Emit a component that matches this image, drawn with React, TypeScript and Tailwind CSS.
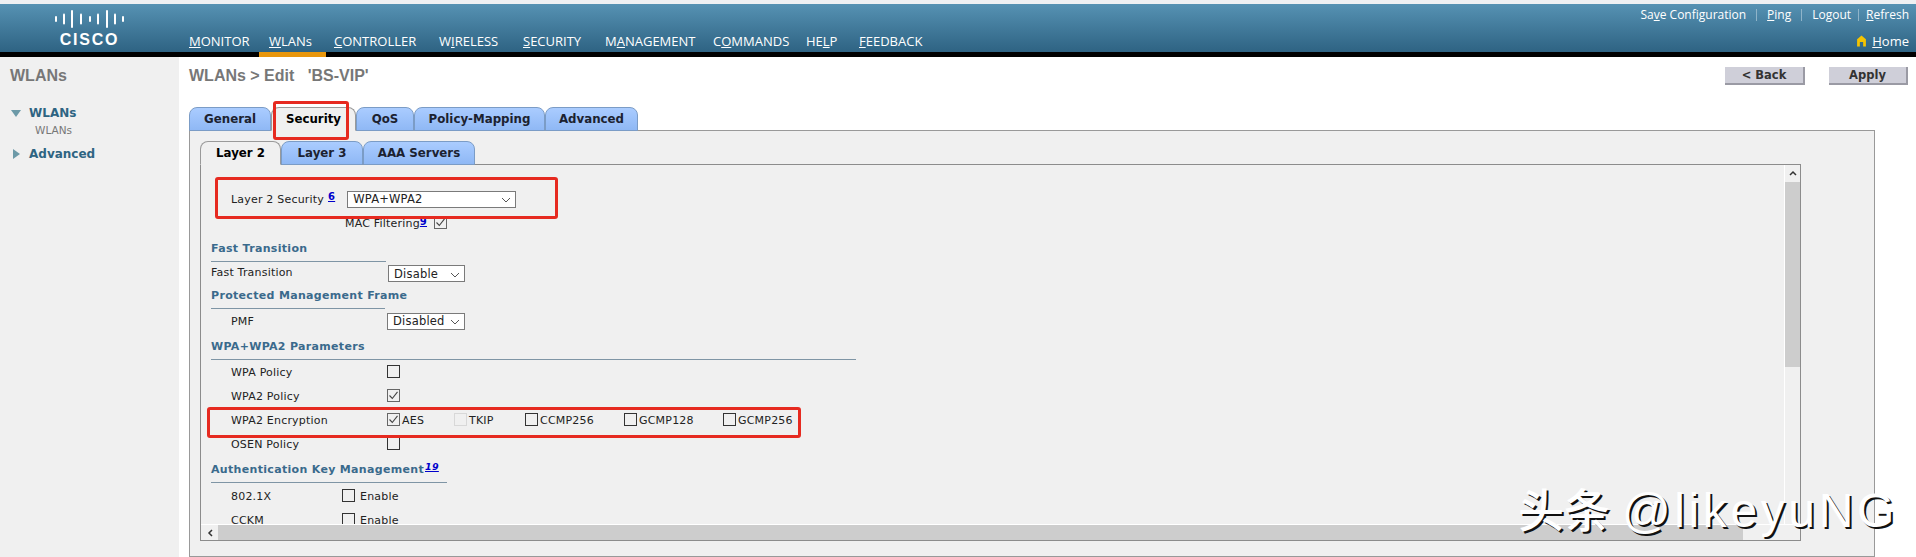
import React from 'react';

// --- Small bits ---

const Check: React.FC<{ on?: boolean; off?: boolean }> = ({ on, off }) => (
    <span className={`flex h-[13px] w-[13px] shrink-0 items-center justify-center border ${off ? 'border-[#d8d8d8] bg-[#f0f0f0]' : on ? 'border-[#666]' : 'border-[#333]'}`}>
        {on && (
            <svg width="11" height="11" viewBox="0 0 11 11" fill="none" stroke="#444" strokeWidth="1.1">
                <path d="M1.5 5.5 L4.3 8.5 L9.5 1.8" />
            </svg>
        )}
    </span>
);

const Select: React.FC<{ value: string; className: string }> = ({ value, className }) => (
    <div className={`flex h-[17px] items-center justify-between border border-[#7a7a7a] bg-white pl-[5px] pr-[4px] text-[11.5px] text-[#222] ${className}`}>
        <span className="pt-[2px]">{value}</span>
        <svg width="10" height="6" viewBox="0 0 10 6" fill="none" stroke="#555" strokeWidth="1" className="mt-[2px]">
            <path d="M1 1 L5 5 L9 1" />
        </svg>
    </div>
);

const Heading: React.FC<{ children: React.ReactNode; line: string }> = ({ children, line }) => (
    <div className={`ml-[10px] flex h-[27px] items-center border-b border-[#7f95a5] pt-[2px] text-[11px] font-bold tracking-[0.32px] text-[#3a6a8c] ${line}`}>
        {children}
    </div>
);

const Tab: React.FC<{ label: string; width: string; active?: boolean }> = ({ label, width, active }) => (
    <div className={`-mb-px flex h-[24px] items-center justify-center rounded-t-[8px] border pt-[2px] text-[11.8px] font-bold text-[#1c2230] ${width} ${active ? 'border-[#9a9a9a] border-b-[#f0f0f0] bg-[#f0f0f0] text-black' : 'border-[#7b9cc6] bg-gradient-to-b from-[#aaccff] to-[#8fb8f5]'}`}>
        {label}
    </div>
);

const Row: React.FC<{ label: string; height?: string; labelWidth?: string; children?: React.ReactNode }> = ({ label, height = 'h-[24px]', labelWidth = 'w-[186px]', children }) => (
    <div className={`flex items-center ${height}`}>
        <span className={`shrink-0 pl-[30px] pt-[2px] text-[#222] ${labelWidth}`}>{label}</span>
        {children}
    </div>
);

const NavItem: React.FC<{ pre?: string; u: string; post: string; width: string; active?: boolean }> = ({ pre, u, post, width, active }) => (
    <span className={`relative whitespace-nowrap ${width}`}>
        {pre}<span className="underline">{u}</span>{post}
        {active && <span className="absolute -bottom-[6px] -left-[10px] right-[8px] h-[5px] bg-[#e8960c]" />}
    </span>
);

const Encryption: React.FC<{ label: string; width: string; on?: boolean; off?: boolean }> = ({ label, width, on, off }) => (
    <span className={`flex items-center gap-[2px] ${width}`}>
        <span className="-mt-[2px]"><Check on={on} off={off} /></span>
        <span className="pt-[2px] text-[#222]">{label}</span>
    </span>
);

const Logo: React.FC = () => (
    <div className="flex w-[189px] shrink-0 flex-col items-center pr-[10px]">
        <svg width="70" height="20" viewBox="0 0 70 20" className="mt-[5px]" fill="#fff">
            {[[1, 6], [9, 11], [17, 18], [26, 11], [35, 6], [43, 11], [52, 18], [60, 11], [68, 6]].map(([x, h]) => (
                <rect key={x} x={x - 1} y={10 - h / 2} width="2" height={h} rx="1" />
            ))}
        </svg>
        <span className="mt-[2px] font-['Liberation_Sans'] text-[16px] leading-[17px] font-bold tracking-[1.8px] text-white">CISCO</span>
    </div>
);

// --- Header ---

const Header: React.FC = () => (
    <header className="flex h-[53px] shrink-0 border-b-[5px] border-black bg-gradient-to-b from-[#5692b3] to-[#2e6383] font-['Open_Sans'] text-white">
        <Logo />
        <nav className="flex flex-1 items-end pb-[1px] text-[13px] leading-[20px]">
            <NavItem u="M" post="ONITOR" width="w-[80px]" />
            <NavItem u="W" post="LANs" width="w-[65px]" active />
            <NavItem u="C" post="ONTROLLER" width="w-[105px]" />
            <NavItem pre="W" u="I" post="RELESS" width="w-[84px]" />
            <NavItem u="S" post="ECURITY" width="w-[82px]" />
            <NavItem pre="M" u="A" post="NAGEMENT" width="w-[108px]" />
            <NavItem pre="C" u="O" post="MMANDS" width="w-[93px]" />
            <NavItem pre="HE" u="L" post="P" width="w-[53px]" />
            <NavItem u="F" post="EEDBACK" width="w-[70px]" />
        </nav>
        <div className="flex flex-col items-end justify-between pr-[7px] pb-[1px] pt-[2px] text-[12px] leading-[18px]">
            <div className="flex items-center">
                <span>Sa<span className="underline">v</span>e Configuration</span>
                <span className="mx-[10px] h-[12px] w-px bg-[#8fb4c9]" />
                <span><span className="underline">P</span>ing</span>
                <span className="mx-[10px] h-[12px] w-px bg-[#8fb4c9]" />
                <span>Lo<span className="underline">g</span>out</span>
                <span className="mx-[7px] h-[12px] w-px bg-[#8fb4c9]" />
                <span><span className="underline">R</span>efresh</span>
            </div>
            <div className="flex items-center gap-[5px] text-[13px] leading-[20px]">
                <svg width="11" height="12" viewBox="0 0 10 10" fill="#f5c400">
                    <path d="M5 0 L9 3.5 V10 H6.5 V6 H3.5 V10 H1 V3.5 Z" />
                </svg>
                <span><span className="underline">H</span>ome</span>
            </div>
        </div>
    </header>
);

// --- Sidebar ---

const Sidebar: React.FC = () => (
    <aside className="w-[179px] shrink-0 bg-[#f0f0f0] pl-[10px]">
        <div className="flex h-[38px] items-center font-['Liberation_Sans'] text-[16px] font-bold text-[#777]">WLANs</div>
        <div className="mt-[8px] flex h-[20px] items-center text-[12px] font-bold text-[#2e6482]">
            <svg width="10" height="7" viewBox="0 0 10 7" fill="#6d9aa8" className="ml-[1px] mr-[8px]"><path d="M0 0 H10 L5 7 Z" /></svg>
            WLANs
        </div>
        <div className="ml-[25px] mt-[-2px] h-[18px] text-[10.5px] leading-[18px] text-[#777]">WLANs</div>
        <div className="mt-[5px] flex h-[20px] items-center text-[12px] font-bold text-[#2e6482]">
            <svg width="7" height="10" viewBox="0 0 7 10" fill="#6d9aa8" className="ml-[3px] mr-[9px]"><path d="M0 0 L7 5 L0 10 Z" /></svg>
            Advanced
        </div>
    </aside>
);

// --- Security form ---

const SecurityForm: React.FC = () => (
    <div className="h-full overflow-hidden pt-[22px] text-[11px] tracking-[0.2px]">
        <Row label="Layer 2 Security" labelWidth="w-[146px]">
            <span className="-ml-[19px] mr-[12px] -mt-[6px] text-[10px] font-bold text-[#0000cc] underline">6</span>
            <Select value="WPA+WPA2" className="w-[169px]" />
        </Row>
        <div className="flex h-[24px] items-center pl-[144px] text-[#222]">
            <span className="pt-[2px]">MAC Filtering</span>
            <span className="-mt-[4px] text-[10px] font-bold text-[#0000cc] underline">9</span>
            <span className="ml-[7px] -mt-[2px]"><Check on /></span>
        </div>
        <Heading line="w-[175px]">Fast Transition</Heading>
        <div className="flex h-[20px] items-center">
            <span className="w-[187px] pl-[10px] pt-[2px] text-[#222]">Fast Transition</span>
            <Select value="Disable" className="mt-[3px] w-[77px]" />
        </div>
        <Heading line="w-[174px]"><span className="whitespace-nowrap">Protected Management Frame</span></Heading>
        <Row label="PMF">
            <Select value="Disabled" className="w-[78px]" />
        </Row>
        <Heading line="w-[645px]">WPA+WPA2 Parameters</Heading>
        <Row label="WPA Policy"><span className="-mt-[2px]"><Check /></span></Row>
        <Row label="WPA2 Policy"><span className="-mt-[2px]"><Check on /></span></Row>
        <Row label="WPA2 Encryption">
            <Encryption label="AES" width="w-[67px]" on />
            <Encryption label="TKIP" width="w-[71px]" off />
            <Encryption label="CCMP256" width="w-[99px]" />
            <Encryption label="GCMP128" width="w-[99px]" />
            <Encryption label="GCMP256" width="w-[80px]" />
        </Row>
        <Row label="OSEN Policy"><span className="-mt-[2px]"><Check /></span></Row>
        <Heading line="w-[236px]">
            <span className="whitespace-nowrap">Authentication Key Management</span>
            <span className="ml-[1px] -mt-[6px] text-[9.5px] font-bold italic text-[#0000cc] underline">19</span>
        </Heading>
        <Row label="802.1X" height="h-[26px]" labelWidth="w-[141px]">
            <span className="-mt-[2px]"><Check /></span><span className="ml-[5px] pt-[2px] text-[#222]">Enable</span>
        </Row>
        <Row label="CCKM" height="h-[22px]" labelWidth="w-[141px]">
            <span className="-mt-[2px]"><Check /></span><span className="ml-[5px] pt-[2px] text-[#222]">Enable</span>
        </Row>
    </div>
);

// --- Page ---

export default function App() {
    return (
        <div className="relative flex h-[557px] w-[1916px] flex-col overflow-hidden bg-white font-['DejaVu_Sans',sans-serif]">
            <div className="h-[4px] shrink-0 bg-[#eef0f2]" />
            <Header />
            <div className="flex min-h-0 flex-1">
                <Sidebar />
                <main className="min-w-0 flex-1 pl-[10px]">
                    <div className="flex h-[38px] items-center justify-between pr-[8px]">
                        <h1 className="whitespace-pre font-['Liberation_Sans'] text-[16px] font-bold text-[#777]">WLANs &gt; Edit   'BS-VIP'</h1>
                        <div className="flex gap-[24px]">
                            <button className="h-[18px] w-[80px] border-r-2 border-b-2 border-[#9a9aa4] bg-[#cfcfd9] text-[11.5px] font-bold text-[#333]">&lt; Back</button>
                            <button className="h-[18px] w-[79px] border-r-2 border-b-2 border-[#9a9aa4] bg-[#cfcfd9] text-[11.5px] font-bold text-[#333]">Apply</button>
                        </div>
                    </div>
                    <div className="mt-[12px] flex pl-0">
                        <Tab label="General" width="w-[82px]" />
                        <Tab label="Security" width="w-[85px]" active />
                        <Tab label="QoS" width="w-[58px]" />
                        <Tab label="Policy-Mapping" width="w-[131px]" />
                        <Tab label="Advanced" width="w-[93px]" />
                    </div>
                    <section className="h-[427px] w-[1686px] border border-[#999] bg-[#f0f0f0] pl-[10px] pt-[10px]">
                        <div className="flex">
                            <Tab label="Layer 2" width="w-[81px]" active />
                            <Tab label="Layer 3" width="w-[82px]" />
                            <Tab label="AAA Servers" width="w-[112px]" />
                        </div>
                        <div className="flex h-[377px] w-[1601px] flex-col border border-[#8c8c8c]">
                            <div className="flex min-h-0 flex-1">
                                <div className="min-w-0 flex-1"><SecurityForm /></div>
                                <div className="flex w-[16px] shrink-0 flex-col items-center border-l border-white">
                                    <svg width="10" height="17" viewBox="0 0 10 17" fill="none" stroke="#333" strokeWidth="1.5"><path d="M2 10 L5 7 L8 10" /></svg>
                                    <div className="h-[185px] w-full bg-[#cdcdcd]" />
                                </div>
                            </div>
                            <div className="flex h-[16px] shrink-0 border-t border-white">
                                <div className="flex w-[17px] items-center justify-center">
                                    <svg width="8" height="10" viewBox="0 0 8 10" fill="none" stroke="#333" strokeWidth="1.5"><path d="M6 2 L3 5 L6 8" /></svg>
                                </div>
                                <div className="w-[1525px] bg-[#cdcdcd]" />
                            </div>
                        </div>
                    </section>
                </main>
            </div>

            {/* annotations drawn over the screenshot */}
            <div className="absolute left-[273px] top-[101px] h-[39px] w-[76px] rounded-[3px] border-[3px] border-[#e62a20]" />
            <div className="absolute left-[215px] top-[177px] h-[42px] w-[343px] rounded-[3px] border-[3px] border-[#e62a20]" />
            <div className="absolute left-[207px] top-[407px] h-[31px] w-[594px] rounded-[3px] border-[3px] border-[#e62a20]" />
            <div className="absolute left-[1518px] top-[483px] flex items-baseline whitespace-nowrap font-['Liberation_Sans','Noto_Sans_CJK_SC',sans-serif] leading-[56px] text-white [text-shadow:2px_2px_0_#111]">
                <span className="text-[46px] font-medium">头条</span>
                <span className="ml-[12px] text-[48px] tracking-[3.6px]">@likeyuNG</span>
            </div>
        </div>
    );
}
